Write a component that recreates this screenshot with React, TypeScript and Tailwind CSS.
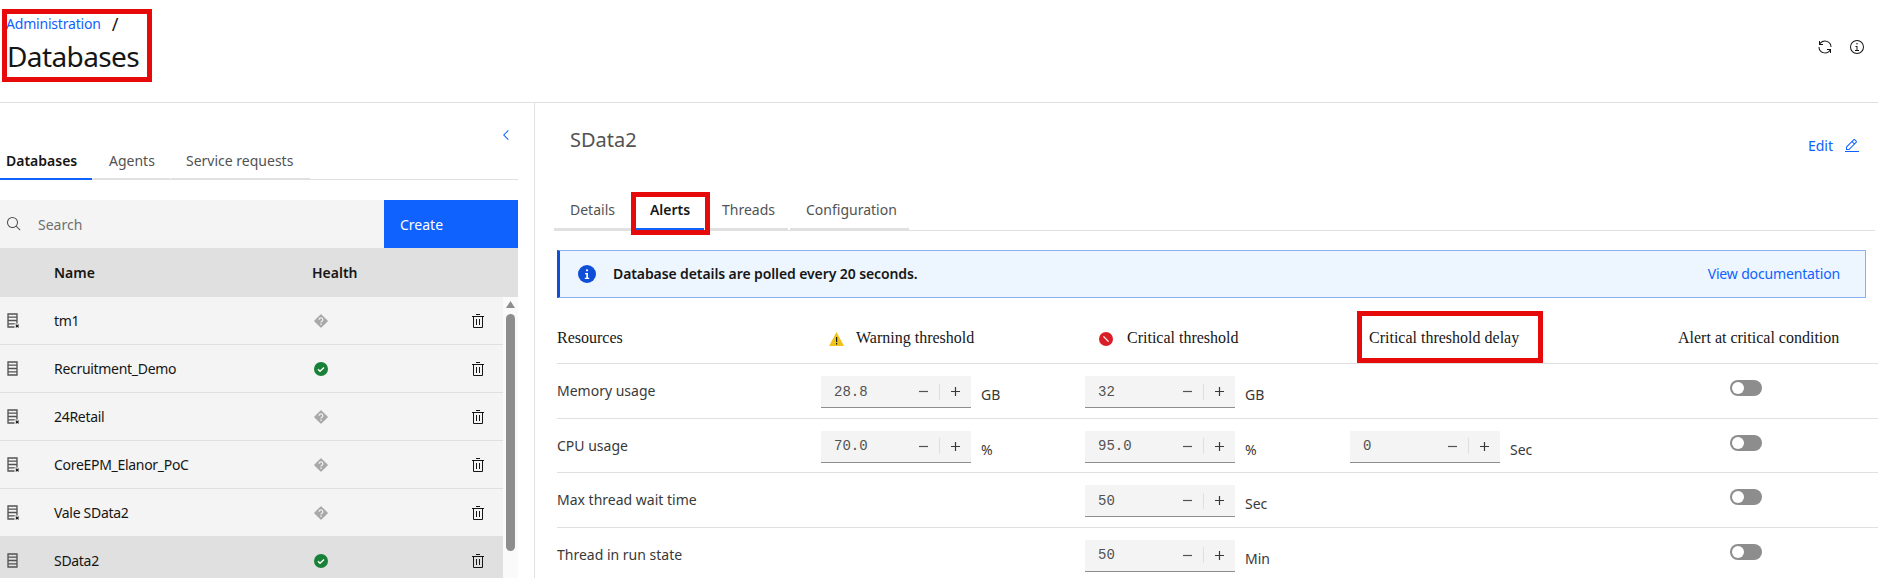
import React from "react";

const SANS = "font-['Noto_Sans',sans-serif]";

function Db({ off }: { off: boolean }) {
  return (
    <svg width="14" height="16" viewBox="0 0 14 16" className="block">
      <path d="M1 1h9v13H1z M1 4.2h9 M1 7.5h9 M1 10.8h9" fill="none" stroke="#525252" strokeWidth="1.3" />
      {off && <rect x="7.5" y="10.5" width="6" height="5" fill="#f4f4f4" />}
      {off && <path d="M8.8 11.6l2.8 2.8M11.6 11.6l-2.8 2.8" stroke="#161616" strokeWidth="1.2" />}
    </svg>
  );
}

function Trash() {
  return (
    <svg width="16" height="16" viewBox="0 0 32 32" fill="#161616" className="block">
      <path d="M12 12h2v12h-2z" />
      <path d="M18 12h2v12h-2z" />
      <path d="M4 6v2h2v20a2 2 0 002 2h16a2 2 0 002-2V8h2V6zm4 22V8h16v20z" />
      <path d="M12 2h8v2h-8z" />
    </svg>
  );
}

function Unknown() {
  return (
    <svg width="14" height="14" viewBox="0 0 14 14" className="block">
      <path d="M7 .8L13.2 7 7 13.2.8 7z" fill="#a8a8a8" stroke="#a8a8a8" strokeWidth="1.2" strokeLinejoin="round" />
      <path d="M5.2 5.7a1.8 1.8 0 113.2 1.1c-.6.5-1.4.7-1.4 1.6" fill="none" stroke="#f4f4f4" strokeWidth="1.2" />
      <circle cx="7" cy="10.2" r=".8" fill="#f4f4f4" />
    </svg>
  );
}

function Healthy() {
  return (
    <svg width="14" height="14" viewBox="0 0 14 14" className="block">
      <circle cx="7" cy="7" r="7" fill="#198038" />
      <path d="M4 7.2l2 2 4-3.6" fill="none" stroke="#fff" strokeWidth="1.4" />
    </svg>
  );
}

function Stepper({ value }: { value: string }) {
  return (
    <div className="flex h-8 w-[150px] items-center border-b border-[#8d8d8d] bg-[#f4f4f4] font-['Liberation_Mono',monospace] text-sm text-[#525252]">
      <span className="flex-1 pl-[13px]">{value}</span>
      <span className="flex w-8 justify-center">
        <svg width="9" height="9" viewBox="0 0 9 9" className="block"><path d="M0 4.5h9" stroke="#525252" strokeWidth="1.2" /></svg>
      </span>
      <span className="h-4 w-px bg-[#e0e0e0]" />
      <span className="-ml-px flex w-8 justify-center">
        <svg width="9" height="9" viewBox="0 0 9 9" className="block"><path d="M0 4.5h9M4.5 0v9" stroke="#393939" strokeWidth="1.2" /></svg>
      </span>
    </div>
  );
}

function Field({ value, unit }: { value?: string; unit?: string }) {
  if (!value) return <div />;
  return (
    <div className="flex items-start">
      <Stepper value={value} />
      <span className="ml-[10px] mt-[9px] text-sm leading-5 text-[#393939]">{unit}</span>
    </div>
  );
}

function Toggle() {
  return (
    <div className="pl-[52px]">
      <div className="flex h-4 w-8 items-center rounded-full bg-[#8d8d8d] pl-[2px]">
        <span className="h-3 w-3 rounded-full bg-white" />
      </div>
    </div>
  );
}

const dbs = [
  { name: "tm1", ok: false },
  { name: "Recruitment_Demo", ok: true },
  { name: "24Retail", ok: false },
  { name: "CoreEPM_Elanor_PoC", ok: false },
  { name: "Vale SData2", ok: false },
  { name: "SData2", ok: true, selected: true },
];

const alertRows = [
  { label: "Memory usage", warn: "28.8", warnUnit: "GB", crit: "32", critUnit: "GB" },
  { label: "CPU usage", warn: "70.0", warnUnit: "%", crit: "95.0", critUnit: "%", delay: "0", delayUnit: "Sec" },
  { label: "Max thread wait time", crit: "50", critUnit: "Sec" },
  { label: "Thread in run state", crit: "50", critUnit: "Min" },
];

const GRID = "grid grid-cols-[264px_264px_265px_328px_1fr]";

export default function App() {
  return (
    <div className={`h-[578px] w-[1878px] overflow-hidden bg-white text-[#161616] ${SANS}`}>
      <header className="relative flex h-[103px] justify-between border-b border-[#e0e0e0]">
        <div className="relative ml-[7px] mt-[9px] h-[73px] self-start pt-[5px]">
          <div className="-ml-px flex text-sm leading-[20px] tracking-[-0.2px]">
            <span className="text-[#0f62fe]">Administration</span>
            <span className="ml-[11px] text-lg leading-5">/</span>
          </div>
          <h1 className="mt-[4px] text-[28px] font-normal leading-9 tracking-[-0.6px]">Databases</h1>
          <div className="absolute -left-[5px] top-0 h-[73px] w-[150px] border-[5px] border-[#e60a0a]" />
        </div>
        <div className="mr-[13px] mt-[39px] flex gap-4 self-start">
          <svg width="16" height="16" viewBox="0 0 32 32" fill="#161616" className="block">
            <path d="M12 10H6.78A11 11 0 0127 16h2A13 13 0 006 7.68V4H4v8h8zM20 22h5.22A11 11 0 015 16H3a13 13 0 0023 8.32V28h2v-8h-8z" />
          </svg>
          <svg width="16" height="16" viewBox="0 0 32 32" fill="#161616" className="block">
            <path d="M17 22v-8h-4v2h2v6h-3v2h8v-2h-3zM16 8a1.5 1.5 0 101.5 1.5A1.5 1.5 0 0016 8z" />
            <path d="M16 30a14 14 0 1114-14 14 14 0 01-14 14zm0-26a12 12 0 1012 12A12 12 0 0016 4z" />
          </svg>
        </div>
      </header>

      <div className="flex">
        <aside className="h-[475px] w-[535px] overflow-hidden border-r border-[#e0e0e0] pr-4">
          <div className="flex h-10 items-end justify-end pr-[4px]">
            <svg width="16" height="16" viewBox="0 0 32 32" fill="#0f62fe" className="block">
              <path d="M10 16L20 6l1.4 1.4L12.8 16l8.6 8.6L20 26z" />
            </svg>
          </div>
          <div className="flex h-[37px] items-stretch border-b border-[#e0e0e0] text-sm">
            <div className="-mb-px flex w-[92px] items-center border-b-2 border-[#0f62fe] pl-[6px] font-semibold">Databases</div>
            <div className="-mb-px ml-px flex w-[77px] items-center border-b-2 border-[#e0e0e0] pl-4 text-[#525252]">Agents</div>
            <div className="-mb-px ml-px flex w-[139px] items-center border-b-2 border-[#e0e0e0] pl-[15px] text-[#525252]">Service requests</div>
          </div>

          <div className="mt-5 flex h-12">
            <div className="flex flex-1 items-center bg-[#f4f4f4] pl-[6px] text-sm text-[#6f6f6f]">
              <svg width="16" height="16" viewBox="0 0 32 32" fill="#525252" className="block">
                <path d="M29 27.586l-7.552-7.552a11.018 11.018 0 10-1.414 1.414L27.586 29zM4 13a9 9 0 119 9A9.01 9.01 0 014 13z" />
              </svg>
              <span className="ml-[16px] pt-px">Search</span>
            </div>
            <div className="flex w-[134px] items-center bg-[#0f62fe] pl-4 pt-px text-sm text-white">Create</div>
          </div>

          <div className="flex h-[49px] items-center bg-[#e0e0e0] text-sm font-semibold">
            <span className="w-[312px] pl-[54px]">Name</span>
            <span>Health</span>
          </div>

          <div className="flex">
            <div className="w-[503px]">
              {dbs.map((d) => (
                <div
                  key={d.name}
                  className={`flex h-12 items-center border-b border-[#e0e0e0] text-sm ${d.selected ? "bg-[#e0e0e0]" : "bg-[#f4f4f4]"}`}
                >
                  <span className="w-[54px] pl-[7px]"><Db off={!d.ok} /></span>
                  <span className="w-[260px] tracking-[-0.3px]">{d.name}</span>
                  <span className="w-[156px]">{d.ok ? <Healthy /> : <Unknown />}</span>
                  <Trash />
                </div>
              ))}
            </div>
            <div className="w-[15px] bg-[#fafafa] pt-[4px]">
              <svg width="9" height="7" viewBox="0 0 9 7" className="ml-[3px] block"><path d="M4.5 0L9 7H0z" fill="#8d8d8d" /></svg>
              <div className="ml-[3px] mt-[6px] h-[237px] w-[9px] rounded-full bg-[#8d8d8d]" />
            </div>
          </div>
        </aside>

        <main className="h-[475px] flex-1 overflow-hidden pl-[19px]">
          <div className="flex h-[51px] items-start justify-between pl-[16px] pr-[18px] pt-[23px]">
            <h2 className="text-xl font-normal leading-7 text-[#525252]">SData2</h2>
            <div className="mt-[10px] flex items-center gap-[11px] text-sm leading-5 text-[#0f62fe]">
              <span>Edit</span>
              <svg width="16" height="16" viewBox="0 0 32 32" fill="#0f62fe" className="block">
                <path d="M2 26h28v2H2zM25.4 9c.8-.8.8-2 0-2.8l-3.6-3.6c-.8-.8-2-.8-2.8 0l-15 15V24h6.4l15-15zm-5-5L24 7.6l-3 3L17.4 7l3-3zM6 22v-3.6l10-10 3.6 3.6-10 10H6z" />
              </svg>
            </div>
          </div>

          <div className="mr-[3px] mt-[27px] flex h-[50px] items-end border-b border-[#e0e0e0] text-sm">
            <div className="flex h-[38px] w-[81px] items-center border-b-2 border-[#e0e0e0] pl-4 text-[#525252]">Details</div>
            <div className="relative ml-px flex h-[38px] w-[68px] items-center justify-center border-b-2 border-[#0f62fe] font-semibold">
              Alerts
              <div className="absolute -left-[5px] -right-[6px] top-0 h-[43px] border-[5px] border-[#e60a0a]" />
            </div>
            <div className="ml-[2px] flex h-[38px] w-[82px] items-center border-b-2 border-[#e0e0e0] pl-4 text-[#525252]">Threads</div>
            <div className="ml-[2px] flex h-[38px] w-[119px] items-center border-b-2 border-[#e0e0e0] pl-4 text-[#525252]">Configuration</div>
          </div>

          <div className="ml-[3px] mr-[12px] mt-[19px] flex h-[48px] items-center border border-l-[3px] border-[#8ab0f5] border-l-[#0f4fd8] bg-[#edf5ff] pl-[18px] pr-[25px] text-sm">
            <svg width="18" height="18" viewBox="0 0 18 18" className="block">
              <circle cx="9" cy="9" r="9" fill="#0f4fd8" />
              <path d="M9 4.2a1.1 1.1 0 100 2.2 1.1 1.1 0 000-2.2zM7 8h3v4.7h1.2V14H6.8v-1.3H8.3V9.3H7z" fill="#fff" />
            </svg>
            <span className="ml-[17px] font-semibold tracking-[-0.1px]">Database details are polled every 20 seconds.</span>
            <span className="ml-auto tracking-[-0.15px] text-[#0f62fe]">View documentation</span>
          </div>

          <div className="ml-[3px] font-['Liberation_Serif',serif] text-base">
            <div className={`${GRID} h-[66px] items-center border-b border-[#e0e0e0] pt-[14px]`}>
              <span>Resources</span>
              <span className="flex items-center pl-2">
                <svg width="15" height="14" viewBox="0 0 15 14" className="mt-[3px] block">
                  <path d="M7.5 0L15 14H0z" fill="#f1c21b" />
                  <path d="M7 5h1.2v5H7zM7 11h1.2v1.4H7z" fill="#161616" />
                </svg>
                <span className="ml-[12px]">Warning threshold</span>
              </span>
              <span className="flex items-center pl-[14px]">
                <svg width="14" height="14" viewBox="0 0 14 14" className="mt-[3px] block">
                  <circle cx="7" cy="7" r="7" fill="#da1e28" />
                  <path d="M4.4 4.4l5.2 5.2" stroke="#fff" strokeWidth="1.3" />
                </svg>
                <span className="ml-[14px]">Critical threshold</span>
              </span>
              <span className="relative pl-[19px]">
                Critical threshold delay
                <div className="absolute left-[7px] top-[-15px] h-[52px] w-[186px] border-[5px] border-[#e60a0a]" />
              </span>
              <span>Alert at critical condition</span>
            </div>

            <div className={`${SANS} text-sm`}>
              {alertRows.map((r) => (
                <div key={r.label} className={`${GRID} h-[54.5px] border-b border-[#e0e0e0] pt-3`}>
                  <span className="leading-[30px] text-[#393939]">{r.label}</span>
                  <Field value={r.warn} unit={r.warnUnit} />
                  <Field value={r.crit} unit={r.critUnit} />
                  <Field value={r.delay} unit={r.delayUnit} />
                  <div className="pt-[4px]"><Toggle /></div>
                </div>
              ))}
            </div>
          </div>
        </main>
      </div>
    </div>
  );
}
